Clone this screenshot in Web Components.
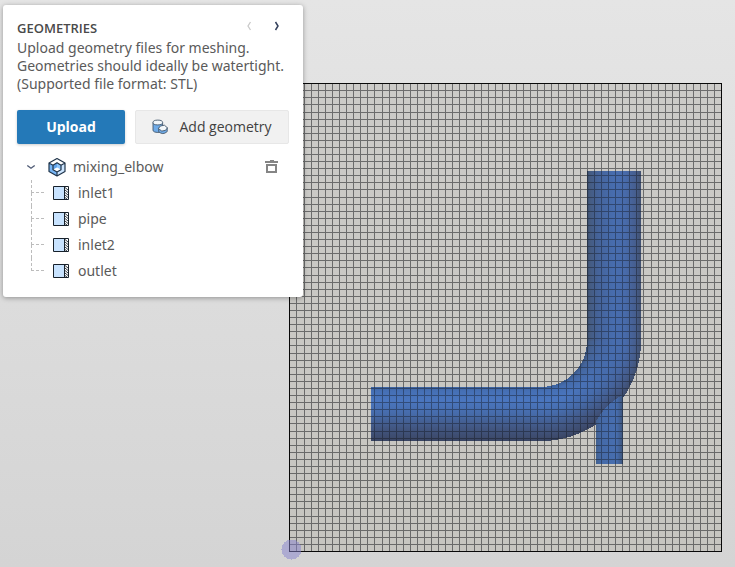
<!DOCTYPE html>
<html lang="en">
<head>
<meta charset="utf-8">
<meta name="viewport" content="width=device-width, initial-scale=1">
<title>Geometries</title>
<style>
  html, body { margin: 0; height: 100%; }
  body { font: 14px/18px "Noto Sans", "Open Sans", sans-serif; color: #5a5a5a; }
</style>
</head>
<body>
<mesh-workspace>
  <mesh-viewport slot="scene"></mesh-viewport>
  <geometry-panel slot="panel">
    <geometry-tree label="mixing_elbow">
      <geometry-face>inlet1</geometry-face>
      <geometry-face>pipe</geometry-face>
      <geometry-face>inlet2</geometry-face>
      <geometry-face>outlet</geometry-face>
    </geometry-tree>
  </geometry-panel>
</mesh-workspace>
<script>
function define(name, html, setup) {
  customElements.define(name, class extends HTMLElement {
    constructor() {
      super();
      this.attachShadow({ mode: "open" }).innerHTML = html;
    }
    connectedCallback() { if (setup) setup(this, this.shadowRoot); }
  });
}

define("mesh-workspace", `
<style>
  :host { display: grid; grid-template: minmax(0, 1fr) / minmax(0, 1fr); height: 100%; overflow: hidden; background: linear-gradient(#e5e5e5, #d4d4d4); }
  ::slotted(*) { grid-area: 1 / 1; }
  ::slotted([slot="panel"]) { place-self: start; margin: 5px 3px; z-index: 1; }
</style>
<slot name="scene"></slot><slot name="panel"></slot>`);

define("mesh-viewport", `
<style>
  :host { display: block; min-height: 0; }
  svg { display: block; width: 100%; height: 100%; }
</style>
<svg viewBox="0 0 735 567" preserveAspectRatio="xMinYMin meet" role="img" aria-label="Mixing elbow in the meshing grid">
  <defs>
    <linearGradient id="floor" x1="0" y1="0" x2="0" y2="1"><stop stop-color="#cccbc8"/><stop offset="1" stop-color="#c6c5c0"/></linearGradient>
    <linearGradient id="upright">
      <stop stop-color="#374965"/><stop offset=".05" stop-color="#455b80"/><stop offset=".2" stop-color="#456399"/><stop offset=".5" stop-color="#476daf"/><stop offset=".7" stop-color="#486bab"/><stop offset=".9" stop-color="#465e8e"/><stop offset="1" stop-color="#42516f"/>
    </linearGradient>
    <linearGradient id="level" x1="0" y1="0" x2="0" y2="1">
      <stop stop-color="#3d639f"/><stop offset=".07" stop-color="#456fb4"/><stop offset=".25" stop-color="#4a76bf"/><stop offset=".5" stop-color="#466baa"/><stop offset=".75" stop-color="#425783"/><stop offset=".95" stop-color="#3d4a6b"/><stop offset="1" stop-color="#36425f"/>
    </linearGradient>
    <radialGradient id="bendUp" gradientUnits="userSpaceOnUse" cx="541" cy="341" r="100">
      <stop offset=".46" stop-color="#374965"/><stop offset=".49" stop-color="#455b80"/><stop offset=".57" stop-color="#456399"/><stop offset=".73" stop-color="#476daf"/><stop offset=".84" stop-color="#486bab"/><stop offset=".94" stop-color="#465e8e"/><stop offset="1" stop-color="#42516f"/>
    </radialGradient>
    <radialGradient id="bendLevel" gradientUnits="userSpaceOnUse" cx="541" cy="341" r="100">
      <stop offset=".46" stop-color="#3d639f"/><stop offset=".5" stop-color="#456fb4"/><stop offset=".6" stop-color="#4a76bf"/><stop offset=".73" stop-color="#466baa"/><stop offset=".87" stop-color="#425783"/><stop offset=".97" stop-color="#3d4a6b"/><stop offset="1" stop-color="#36425f"/>
    </radialGradient>
    <linearGradient id="fade" gradientUnits="userSpaceOnUse" x1="614" y1="341" x2="570" y2="400"><stop stop-color="#fff"/><stop offset="1" stop-color="#000"/></linearGradient>
    <linearGradient id="branch"><stop stop-color="#42618f"/><stop offset=".2" stop-color="#456aa8"/><stop offset=".75" stop-color="#476eb0"/><stop offset="1" stop-color="#3d5479"/></linearGradient>
    <mask id="turn"><path fill="url(#fade)" d="M535 335H645V445H535z"/></mask>
    <clipPath id="elbow"><path d="M371 387H541A46 46 0 0 0 587 341V171H641V341A100 100 0 0 1 623 397V464H596V423A100 100 0 0 1 541 441H371z"/></clipPath>
  </defs>
  <path fill="url(#floor)" d="M289 83H722V552H289z"/>
  <path class="grid" fill="none" stroke="#101216" stroke-opacity=".51" shape-rendering="crispEdges"/>
  <path fill="url(#level)" d="M371 387H541V441H371z"/>
  <path fill="url(#upright)" d="M587 171H641V341H587z"/>
  <g shape-rendering="crispEdges">
    <path fill="url(#bendLevel)" d="M587 341H641A100 100 0 0 1 541 441V387A46 46 0 0 0 587 341z"/>
    <path fill="url(#bendUp)" mask="url(#turn)" d="M587 341H641A100 100 0 0 1 541 441V387A46 46 0 0 0 587 341z"/>
    <path fill="url(#branch)" d="M596 421Q604 408 612 402L623 394V464H596z"/>
  </g>
  <g clip-path="url(#elbow)"><path class="grid" fill="none" stroke="#101216" stroke-opacity=".4" shape-rendering="crispEdges"/></g>
  <path fill="none" stroke="#080808" d="M289.5 83.500H721.500V551.500H289.500z" shape-rendering="crispEdges"/>
  <circle cx="291.500" cy="549.500" r="10" fill="#8582cd" fill-opacity=".5" shape-rendering="crispEdges"/>
</svg>`, (host, root) => {
  // Cells are 7 units wide; the listed lines end a cell of 8.
  const lines = (from, to, wide) => {
    const out = [];
    for (let p = from; (p += wide.includes(p + 8) ? 8 : 7) < to;) out.push(p);
    return out;
  };
  const xs = lines(289, 721, [304, 382, 474, 566, 651]);
  const ys = lines(83, 551, [112, 197, 275, 353, 431, 516]);
  // One path for both directions keeps crossings from doubling in darkness.
  const d = xs.map(x => `M${x + .5} 84V551`).join("") + ys.map(y => `M290 ${y + .5}H721`).join("");
  root.querySelectorAll(".grid").forEach(path => path.setAttribute("d", d));
});

const icons = {
  left: `<svg width="16" height="16" viewBox="0 0 16 16"><path d="M9.500 4 7 8l2.500 4" fill="none" stroke="currentColor" stroke-width="1.300"/></svg>`,
  right: `<svg width="16" height="16" viewBox="0 0 16 16"><path d="M6.500 4 9 8 6.500 12" fill="none" stroke="currentColor" stroke-width="1.500"/></svg>`,
  down: `<svg width="16" height="16" viewBox="0 0 16 16"><path d="M4.300 6.500 8 9.200l3.700-2.700" fill="none" stroke="currentColor" stroke-width="1.400"/></svg>`,
  solids: `<svg width="16" height="16" viewBox="0 0 16 16" stroke="#44586c" stroke-width=".9"><path d="M1 3.500v7.700c0 3 9.600 3 9.600 0V3.500" fill="#6fabe8"/><ellipse cx="5.800" cy="3.500" rx="4.800" ry="2.400" fill="#f3f7fa"/><path d="M6.700 9v3.600q4 4 8.500 0V8.500z" fill="#6fabe8"/><path d="m6.400 9.500 2-2.500 4-.8 3 2.600-1.800 2.500-3.800.8z" fill="#f3f7fa"/></svg>`,
  cube: `<svg width="20" height="20" viewBox="0 0 20 20" stroke-linejoin="round"><path d="M10 1.500 18 6v8.500l-8 4.500-8-4.500V6z" fill="#cce5ff"/><path d="M2 6l4 2.200v4.500l4 2.300v4l-8-4.500z" fill="#76b5f5"/><path d="m2 6 8-4.500L18 6l-4 2.200L10 6 6 8.200z" fill="#fff"/><path d="m6 8.200 4-2.500v4.700l-4 2.300z" fill="#62a5ec"/><path d="m10 5.700 4 2.500v4.500l-4-2.300z" fill="#8ec6fb"/><path d="m6 12.700 4-2.300 4 2.300L10 15z" fill="#fff"/><path d="M10 1.500 18 6v8.500l-8 4.500-8-4.500V6zM2 6l4 2.200 4-2.500 4 2.500L18 6M6 8.200v4.500l4 2.300 4-2.300V8.200M10 15v4" fill="none" stroke="#20344a" stroke-width="1.200"/></svg>`,
  trash: `<svg width="14" height="14" viewBox="0 0 14 14" shape-rendering="crispEdges"><path d="M0 1H5V0H9V1H13V3H0zM1 4H12V13H1zM3 6V11H10V6z" fill="#858585" fill-rule="evenodd"/></svg>`,
  face: `<svg width="16" height="14" viewBox="0 0 16 14"><path d="M1 1H15V13H1z" fill="#fff"/><path d="M1 1H11V13H1z" fill="#c8e3ff"/><path d="m12 1.500 3 2.500m-3 0 3 2.500m-3 0L15 9m-3 0 3 2.500m-3 0 2 1.500" stroke="#17212b" stroke-width=".9"/><path d="M.5.5H15.500V13.500H.5zM11.500 1V13" fill="none" stroke="#17212b"/></svg>`
};
define("app-icon", `<style>:host { display: inline-flex; } svg { display: block; }</style><span></span>`,
  (host, root) => { root.querySelector("span").innerHTML = icons[host.getAttribute("name")]; });

define("geometry-panel", `
<style>
  :host { display: block; box-sizing: border-box; width: min(300px, calc(100% - 6px)); padding: 14px 14px 13px; border-radius: 3px; background: #fff; box-shadow: 0 1px 5px rgba(0,0,0,.35); }
  header { display: flex; align-items: center; justify-content: space-between; height: 18px; }
  h2 { margin: 0; font: 600 13px/18px "Open Sans", sans-serif; color: #4a4a4a; }
  nav { display: flex; gap: 12px; padding-right: 4px; }
  button { font: inherit; border: 0; margin: 0; padding: 0; background: none; color: #34405c; cursor: pointer; }
  nav button:disabled { color: #c9c9c9; cursor: default; }
  p { margin: 2px 0 17px; white-space: nowrap; }
  .actions { display: grid; grid-template-columns: 108fr 154fr; gap: 10px; }
  .actions button { display: flex; align-items: center; justify-content: center; gap: 11px; height: 34px; border-radius: 2px; font-family: "Open Sans", sans-serif; font-weight: 500; }
  .actions .primary { background: #2479b8; color: #fff; font-weight: 700; box-shadow: 0 1px 3px rgba(0,0,0,.2); }
  .actions .plain { background: #f1f1f1; color: #414141; border: 1px solid #e7e7e7; }
</style>
<header>
  <h2>GEOMETRIES</h2>
  <nav aria-label="Steps">
    <button type="button" disabled aria-label="Previous"><app-icon name="left"></app-icon></button>
    <button type="button" aria-label="Next"><app-icon name="right"></app-icon></button>
  </nav>
</header>
<p>Upload geometry files for meshing.<br>Geometries should ideally be watertight.<br>(Supported file format: STL)</p>
<div class="actions">
  <button type="button" class="primary">Upload</button>
  <button type="button" class="plain"><app-icon name="solids"></app-icon>Add geometry</button>
</div>
<slot></slot>`);

define("geometry-tree", `
<style>
  :host { display: block; margin-top: 10px; }
  .row { display: flex; align-items: center; height: 26px; padding: 0 10px 0 6px; }
  .name { flex: 1; margin-left: 6px; }
  app-icon[name="cube"] { margin-left: 8px; }
  button { display: flex; border: 0; padding: 0; background: none; color: #4f5b75; cursor: pointer; }
  .faces { padding-left: 14px; }
</style>
<div class="row">
  <button type="button" aria-label="Collapse" aria-expanded="true"><app-icon name="down"></app-icon></button>
  <app-icon name="cube"></app-icon><span class="name"></span>
  <button type="button" aria-label="Delete geometry"><app-icon name="trash"></app-icon></button>
</div>
<div class="faces"><slot></slot></div>`,
  (host, root) => { root.querySelector(".name").textContent = host.getAttribute("label"); });

define("geometry-face", `
<style>
  :host { display: flex; align-items: center; height: 26px; }
  .branch { align-self: stretch; width: 13px; margin-right: 9px; display: grid; grid-template-rows: 13px 13px; }
  .branch i { border-left: 1px dashed #bcbcbc; }
  .branch i:first-child { border-bottom: 1px dashed #bcbcbc; }
  :host(:last-of-type) .branch i:last-child { border: 0; }
  app-icon { margin-right: 9px; }
</style>
<span class="branch"><i></i><i></i></span><app-icon name="face"></app-icon><span><slot></slot></span>`);
</script>
</body>
</html>
